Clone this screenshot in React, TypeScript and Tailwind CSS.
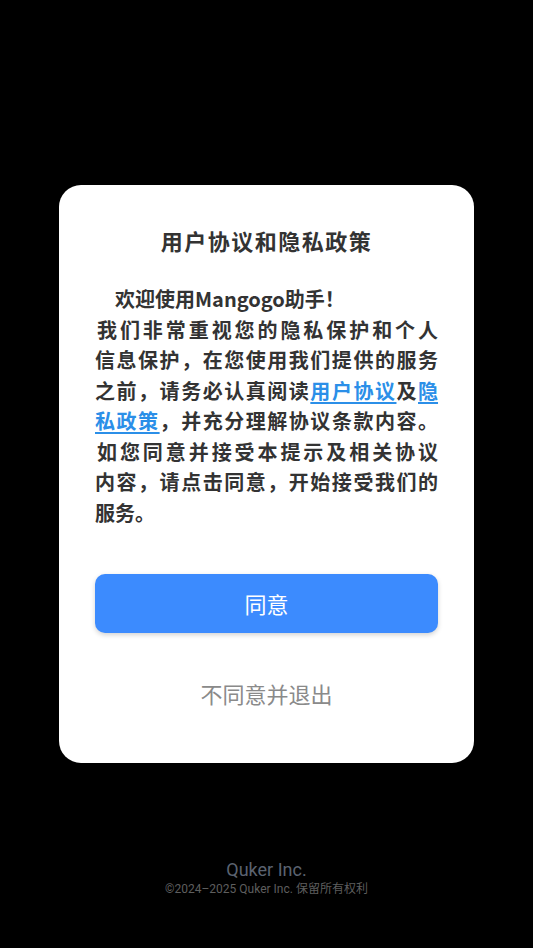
const cjk = "font-['Noto_Sans_CJK_SC',sans-serif]";

const Line = ({ children, last = false, className = "" }: { children: React.ReactNode; last?: boolean; className?: string }) => (
    <span className={`block ${last ? "text-left" : "text-justify [text-align-last:justify]"} ${className}`}>{children}</span>
);

const Link = ({ children }: { children: React.ReactNode }) => (
    <a href="#" className="text-[#2b8fe8] underline decoration-[1.5px] underline-offset-[3px]">{children}</a>
);

export default function App() {
    return (
        <div className={`grid h-[948px] w-full grid-rows-[1fr_auto_1fr] bg-black ${cjk}`}>
            <div />
            <div className="mx-[59px] rounded-[22px] bg-white px-9 pt-[40px] pb-[55px]">
                <h1 className="text-center text-[22px] leading-[30px] font-bold tracking-[1.5px] text-[#333]">用户协议和隐私政策</h1>
                <div className="mt-[29px] text-[20px] leading-[30.5px] font-bold text-[#333]">
                    <p className="pl-5">欢迎使用Mangogo助手！</p>
                    <p>
                        <Line className="pl-[2px]">我们非常重视您的隐私保护和个人</Line>
                        <Line>信息保护，在您使用我们提供的服务</Line>
                        <Line>之前，请务必认真阅读<Link>用户协议</Link>及<Link>隐</Link></Line>
                        <Line><Link>私政策</Link>，并充分理解协议条款内容。</Line>
                    </p>
                    <p>
                        <Line className="pl-[2px]">如您同意并接受本提示及相关协议</Line>
                        <Line>内容，请点击同意，开始接受我们的</Line>
                        <Line last>服务。</Line>
                    </p>
                </div>
                <button className="mt-[46px] flex h-[59px] w-full items-center justify-center rounded-[10px] bg-[#3c8bfe] text-[22px] text-white shadow-[0_2px_5px_rgba(0,0,0,0.18)]">
                    同意
                </button>
                <button className="mt-[45px] block w-full text-center text-[22px] leading-[30px] text-[#8a8a8a]">不同意并退出</button>
            </div>
            <div className="flex flex-col items-center justify-end pb-[51px]">
                <p className="font-['Roboto',sans-serif] text-[18px] leading-[22px] text-[#5b6370]">Quker Inc.</p>
                <p className="font-['Roboto','Noto_Sans_CJK_SC',sans-serif] text-[12px] leading-[16px] text-[#5e5e5e]">©2024–2025 Quker Inc. 保留所有权利</p>
            </div>
        </div>
    );
}
